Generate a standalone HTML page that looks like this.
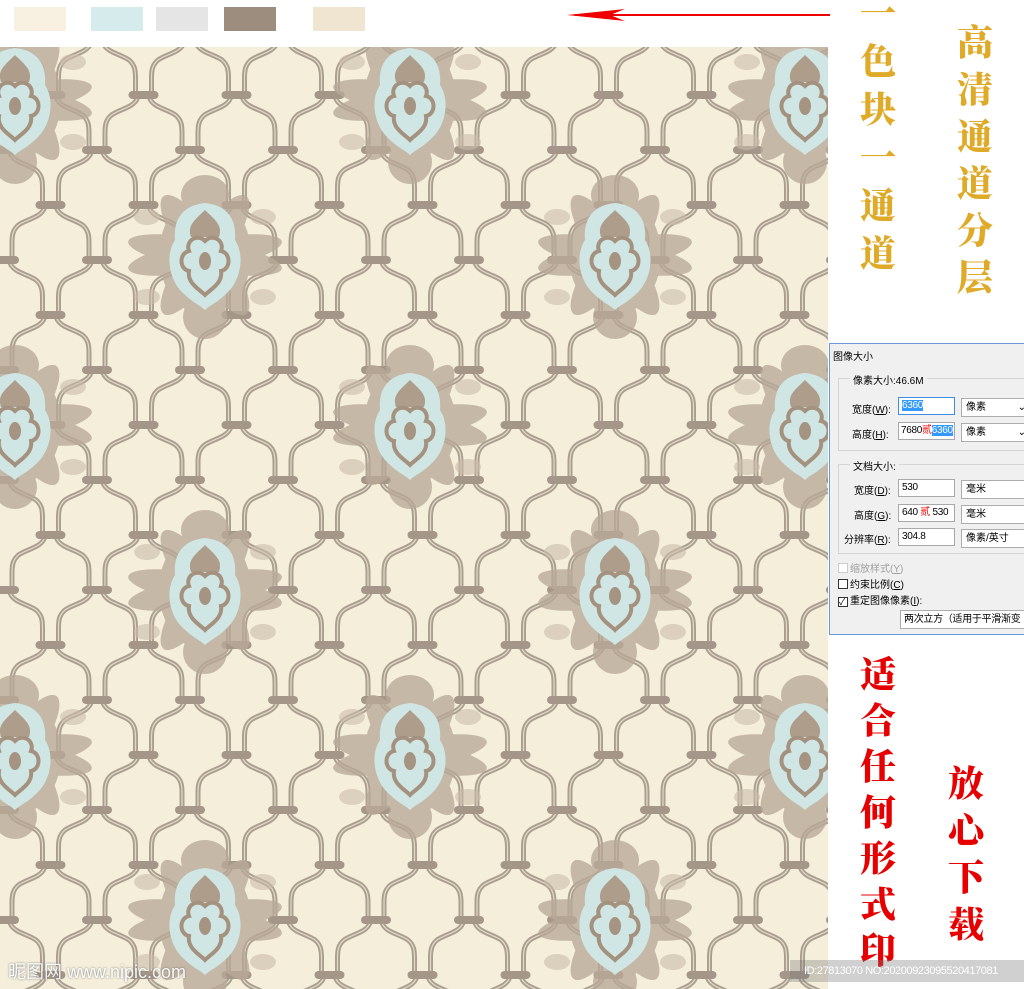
<!DOCTYPE html>
<html><head><meta charset="utf-8"><style>
*{margin:0;padding:0;box-sizing:border-box}
body{width:1024px;height:989px;overflow:hidden;background:#fff;position:relative;font-family:"Liberation Sans","Noto Sans CJK SC",sans-serif}
.sw{position:absolute;top:7px;height:24px;width:52px}
.v{position:absolute;font-family:"Noto Serif CJK SC","Noto Sans CJK SC",serif;font-weight:900;text-align:center;width:50px}
.v span{display:block}
.dlg{position:absolute;left:829px;top:343px;width:200px;height:292px;background:#f0f0f0;border:1px solid #6a9bd8;font-size:10px;color:#000;white-space:nowrap}
.dlg .t{position:absolute}
.in{position:absolute;background:#fff;border:1px solid #a9a9a9;height:18px;padding-left:3px;line-height:16px;overflow:hidden;letter-spacing:-0.3px}
.sel{position:absolute;background:#fff;border:1px solid #adadad;height:19px;padding-left:4px;line-height:17px;width:70px}
.grp{position:absolute;border:1px solid #d5d5d5}
.cb{display:inline-block;width:10px;height:10px;border:1px solid #333;background:#fff;vertical-align:-1px;margin-right:2px;font-size:9px;line-height:8px}
</style></head><body>
<div class="sw" style="left:14px;background:#f8f1e1"></div>
<div class="sw" style="left:91px;background:#d6ebeb"></div>
<div class="sw" style="left:156px;background:#e5e5e5"></div>
<div class="sw" style="left:224px;background:#9c8d7f"></div>
<div class="sw" style="left:313px;background:#efe5d1"></div>
<svg style="position:absolute;left:565px;top:7px" width="270" height="16"><line x1="10" y1="8" x2="265" y2="8" stroke="#e00" stroke-width="2"/><path d="M2 8 L60 2 L45 8 L60 14Z" fill="#e00"/></svg>

<svg style="position:absolute;left:0;top:47px" width="828" height="942">
<defs>
<pattern id="lat" width="93" height="110" patternUnits="userSpaceOnUse" patternTransform="translate(4,-7)">
<g id="edges" fill="none" stroke="#aa9e90" stroke-width="5">
<path d="M6,3 C10,13 24,14 32,20 C38,25 38.5,31 38.5,38 L38.5,56"/>
<path d="M87,3 C83,13 69,14 61,20 C55,25 54.5,31 54.5,38 L54.5,56"/>
<path d="M40.5,58 C36.5,68 22.5,69 14.5,75 C8.5,80 8,86 8,93 L8,111"/>
<path d="M52.5,58 C56.5,68 70.5,69 78.5,75 C84.5,80 85,86 85,93 L85,111"/>
</g>
<g fill="none" stroke="#e2d9c6" stroke-width="1.2">
<path d="M6,3 C10,13 24,14 32,20 C38,25 38.5,31 38.5,38 L38.5,56"/>
<path d="M87,3 C83,13 69,14 61,20 C55,25 54.5,31 54.5,38 L54.5,56"/>
<path d="M40.5,58 C36.5,68 22.5,69 14.5,75 C8.5,80 8,86 8,93 L8,111"/>
<path d="M52.5,58 C56.5,68 70.5,69 78.5,75 C84.5,80 85,86 85,93 L85,111"/>
</g>
<g fill="#a4978a"><rect x="-15" y="-4" width="30" height="8" rx="4"/><rect x="78" y="-4" width="30" height="8" rx="4"/><rect x="31.5" y="51" width="30" height="8" rx="4"/><rect x="-15" y="106" width="30" height="8" rx="4"/><rect x="78" y="106" width="30" height="8" rx="4"/></g>
</pattern>
<g id="dm">
<g fill="#b9a998" opacity="0.78">
<ellipse cx="0" cy="0" rx="20" ry="72" transform="rotate(35)"/>
<ellipse cx="0" cy="0" rx="20" ry="72" transform="rotate(-35)"/>
<ellipse cx="0" cy="0" rx="16" ry="78" transform="rotate(80)"/>
<ellipse cx="0" cy="0" rx="16" ry="78" transform="rotate(-80)"/>
<ellipse cx="0" cy="-60" rx="24" ry="20"/>
<ellipse cx="0" cy="62" rx="22" ry="22"/>
<ellipse cx="0" cy="0" rx="46" ry="60"/>
</g>
<g fill="#cbbdaa" opacity="0.6">
<ellipse cx="-58" cy="-38" rx="13" ry="8"/><ellipse cx="58" cy="-38" rx="13" ry="8"/>
<ellipse cx="-58" cy="42" rx="13" ry="8"/><ellipse cx="58" cy="42" rx="13" ry="8"/>
</g>
<path d="M0,-52 C20,-50 32,-38 30,-15 C40,0 36,25 22,38 C12,48 5,50 0,55 C-5,50 -12,48 -22,38 C-36,25 -40,0 -30,-15 C-32,-38 -20,-50 0,-52Z" fill="#cfe6e4"/>
<path d="M0,-45 C10,-35 18,-30 14,-18 L-14,-18 C-18,-30 -10,-35 0,-45Z" fill="#ae9d8b"/>
<path d="M0,-14 C8,-22 20,-14 16,-4 C26,-2 26,14 16,16 C18,28 6,34 0,40 C-6,34 -18,28 -16,16 C-26,14 -26,-2 -16,-4 C-20,-14 -8,-22 0,-14Z" fill="none" stroke="#a4927f" stroke-width="4"/>
<ellipse cx="0" cy="6" rx="6" ry="9" fill="#a69482"/>
</g>
</defs>
<rect width="828" height="942" fill="#f4eedb"/>
<rect width="828" height="942" fill="url(#lat)"/>
<g transform="translate(0,-47)">
<use href="#dm" x="15" y="100"/><use href="#dm" x="410" y="100"/><use href="#dm" x="805" y="100"/>
<use href="#dm" x="205" y="255"/><use href="#dm" x="615" y="255"/>
<use href="#dm" x="15" y="425"/><use href="#dm" x="410" y="425"/><use href="#dm" x="805" y="425"/>
<use href="#dm" x="205" y="590"/><use href="#dm" x="615" y="590"/>
<use href="#dm" x="15" y="755"/><use href="#dm" x="410" y="755"/><use href="#dm" x="805" y="755"/>
<use href="#dm" x="205" y="920"/><use href="#dm" x="615" y="920"/>
</g>
</svg>

<div class="v" style="left:853px;top:-12px;color:#dfaa28;font-size:36px;line-height:48px"><span>一</span><span>色</span><span>块</span><span>一</span><span>通</span><span>道</span></div>
<div class="v" style="left:950px;top:17px;color:#dfaa28;font-size:36px;line-height:47px"><span>高</span><span>清</span><span>通</span><span>道</span><span>分</span><span>层</span></div>
<div class="v" style="left:853px;top:650px;color:#e60000;font-size:36px;line-height:46px"><span>适</span><span>合</span><span>任</span><span>何</span><span>形</span><span>式</span><span>印</span></div>
<div class="v" style="left:941px;top:758px;color:#e60000;font-size:36px;line-height:47px"><span>放</span><span>心</span><span>下</span><span>载</span></div>

<div style="position:absolute;left:8px;top:958px;color:#fff;font-size:18px;text-shadow:0 0 2px #666;opacity:.9;white-space:nowrap">昵图网 www.nipic.com</div>
<div style="position:absolute;left:790px;top:960px;width:234px;height:22px;background:rgba(120,120,120,.35);color:#fff;font-size:11px;line-height:22px;padding-left:14px;white-space:nowrap;letter-spacing:-0.4px">ID:27813070 NO:20200923095520417081</div>

<div class="dlg">
<div class="t" style="left:3px;top:4px">图像大小</div>
<div class="grp" style="left:8px;top:34px;width:200px;height:73px"></div>
<div class="t" style="left:20px;top:28px;background:#f0f0f0;padding:0 3px">像素大小:46.6M</div>
<div class="t" style="left:22px;top:57px">宽度(<u>W</u>):</div>
<div class="in" style="left:68px;top:53px;width:57px;border-color:#3a8ee6"><span style="background:#3399ff;color:#fff">6360</span></div>
<div class="sel" style="left:131px;top:54px">像素 <span style="float:right;margin-right:4px">⌄</span></div>
<div class="t" style="left:22px;top:82px">高度(<u>H</u>):</div>
<div class="in" style="left:68px;top:78px;width:57px;padding-left:2px">7680<span style="color:#e00">贰</span><span style="background:#3399ff;color:#fff">6360</span></div>
<div class="sel" style="left:131px;top:79px">像素 <span style="float:right;margin-right:4px">⌄</span></div>
<div class="grp" style="left:8px;top:120px;width:200px;height:90px"></div>
<div class="t" style="left:20px;top:114px;background:#f0f0f0;padding:0 3px">文档大小:</div>
<div class="t" style="left:24px;top:138px">宽度(<u>D</u>):</div>
<div class="in" style="left:68px;top:135px;width:57px">530</div>
<div class="sel" style="left:131px;top:136px">毫米</div>
<div class="t" style="left:24px;top:163px">高度(<u>G</u>):</div>
<div class="in" style="left:68px;top:160px;width:57px">640 <span style="color:#e00">贰</span> 530</div>
<div class="sel" style="left:131px;top:161px">毫米</div>
<div class="t" style="left:14px;top:187px">分辨率(<u>R</u>):</div>
<div class="in" style="left:68px;top:184px;width:57px">304.8</div>
<div class="sel" style="left:131px;top:185px">像素/英寸</div>
<div class="t" style="left:8px;top:216px;color:#a0a0a0"><span class="cb" style="border-color:#ccc"></span>缩放样式(<u>Y</u>)</div>
<div class="t" style="left:8px;top:232px"><span class="cb"></span>约束比例(<u>C</u>)</div>
<div class="t" style="left:8px;top:248px"><span class="cb">✓</span>重定图像像素(<u>I</u>):</div>
<div class="in" style="left:70px;top:266px;width:140px;border-color:#adadad;height:19px;line-height:17px">两次立方（适用于平滑渐变</div>
</div>
</body></html>
